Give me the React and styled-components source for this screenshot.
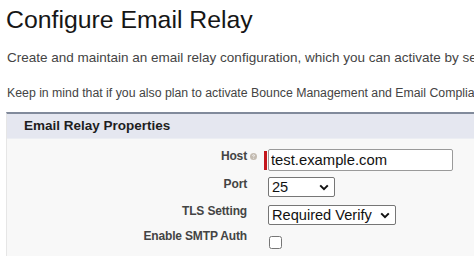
import React from "react";
import styled, { createGlobalStyle } from "styled-components";

const GlobalStyle = createGlobalStyle`
  html, body {
    margin: 0;
    padding: 0;
    background: #fff;
    overflow: hidden;
  }
  body {
    font-family: "Liberation Sans", Arial, sans-serif;
  }
`;

function HelpIcon() {
  return (
    <HelpMark viewBox="0 0 8 8" width="7" height="7">
      <circle cx="4" cy="4" r="4" fill="#c4bcb2" />
      <path d="M2.9 3.1 Q3 2.1 4 2.1 Q5.1 2.1 5.1 3 Q5.1 3.6 4.2 4 L4.2 4.8" stroke="#fff" strokeWidth="0.9" fill="none" />
      <circle cx="4.2" cy="6" r="0.5" fill="#fff" />
    </HelpMark>
  );
}

function Chevron() {
  return (
    <ChevronMark viewBox="0 0 10 7" width="10" height="7">
      <path d="M1.2 1.4 L5 5.2 L8.8 1.4" stroke="#111" strokeWidth="2" fill="none" />
    </ChevronMark>
  );
}

function App() {
  return (
    <Page>
      <GlobalStyle />
      <Title>Configure Email Relay</Title>
      <Intro>
        Create and maintain an email relay configuration, which you can activate by selecting it in the
        Email Relay Activation setup page.
      </Intro>
      <Note>
        Keep in mind that if you also plan to activate Bounce Management and Email Compliance, these
        settings take priority.
      </Note>

      <Section>
        <SectionHeader>Email Relay Properties</SectionHeader>
        <SectionBody>
          <Row>
            <Label lift={7}>
              Host
              <HelpIcon />
            </Label>
            <Field>
              <RequiredBar />
              <TextInput defaultValue="test.example.com" />
            </Field>
          </Row>
          <Row>
            <Label lift={7}>Port</Label>
            <Field>
              <SelectBox width={67}>
                <Select defaultValue="25">
                  <option>25</option>
                  <option>587</option>
                  <option>465</option>
                </Select>
                <Chevron />
              </SelectBox>
            </Field>
          </Row>
          <Row>
            <Label lift={7}>TLS Setting</Label>
            <Field>
              <SelectBox width={128}>
                <Select defaultValue="Required Verify">
                  <option>Required Verify</option>
                  <option>Required</option>
                  <option>Preferred</option>
                </Select>
                <Chevron />
              </SelectBox>
            </Field>
          </Row>
          <Row>
            <Label lift={13}>Enable SMTP Auth</Label>
            <Field>
              <Checkbox type="checkbox" />
            </Field>
          </Row>
        </SectionBody>
      </Section>
    </Page>
  );
}

export default App;

const Page = styled.div`
  padding-left: 6px;
  width: 474px;
  box-sizing: border-box;
  overflow: hidden;
`;

const Title = styled.h1`
  margin: 6px 0 0 0;
  font-size: 24.8px;
  line-height: 28px;
  font-weight: 400;
  color: #161616;
  white-space: nowrap;
`;

const Intro = styled.p`
  margin: 16px 0 0 1px;
  font-size: 13.5px;
  line-height: 16px;
  color: #444;
  white-space: nowrap;
`;

const Note = styled.p`
  margin: 19px 0 0 1px;
  font-size: 12.3px;
  line-height: 16px;
  color: #444;
  white-space: nowrap;
`;

const Section = styled.div`
  margin-top: 11px;
  margin-right: -40px;
  border-top: 2px solid #818a9b;
  border-left: 1px solid #e6e6e6;
  background: #f8f8f8;
`;

const SectionHeader = styled.div`
  height: 24px;
  line-height: 24px;
  padding-left: 17px;
  background: #e5e7f0;
  font-size: 13.5px;
  font-weight: 700;
  color: #1e1e1e;
  border-bottom: 1px solid #eceef3;
`;

const SectionBody = styled.div`
  padding-top: 7px;
`;

const Row = styled.div`
  display: grid;
  grid-template-columns: 240px 1fr;
  align-items: center;
  height: 27.5px;
`;

const Label = styled.div`
  text-align: right;
  font-size: 12px;
  letter-spacing: -0.15px;
  font-weight: 700;
  color: #444;
  line-height: 14px;
  margin-bottom: ${(p) => p.lift}px;
  white-space: nowrap;
`;

const HelpMark = styled.svg`
  display: inline-block;
  margin-left: 3px;
  margin-right: -10px;
  vertical-align: 0px;
`;

const Field = styled.div`
  display: flex;
  align-items: center;
  padding-left: 17px;
`;

const RequiredBar = styled.div`
  width: 3px;
  height: 19px;
  margin-top: 2px;
  margin-right: 1px;
  background: #c4161c;
`;

const TextInput = styled.input`
  box-sizing: border-box;
  width: 185px;
  height: 22px;
  margin: 0;
  padding: 0 2px;
  border: 1px solid #9a9a9a;
  border-radius: 2px;
  background: #fff;
  font-family: "Liberation Sans", Arial, sans-serif;
  font-size: 14.8px;
  color: #111;
  outline: none;
`;

const SelectBox = styled.div`
  position: relative;
  box-sizing: border-box;
  width: ${(p) => p.width}px;
  height: 20px;
  margin-left: 4px;
  border: 1px solid #767676;
  border-radius: 2px;
  background: #fff;
`;

const Select = styled.select`
  appearance: none;
  -webkit-appearance: none;
  width: 100%;
  height: 100%;
  margin: 0;
  padding: 0 0 0 3px;
  border: 0;
  background: transparent;
  font-family: "Liberation Sans", Arial, sans-serif;
  font-size: 14.6px;
  color: #111;
  outline: none;
`;

const ChevronMark = styled.svg`
  position: absolute;
  right: 5px;
  top: 6px;
  pointer-events: none;
`;

const Checkbox = styled.input`
  width: 13px;
  height: 13px;
  margin: 0 0 0 5px;
  accent-color: #fff;
`;
